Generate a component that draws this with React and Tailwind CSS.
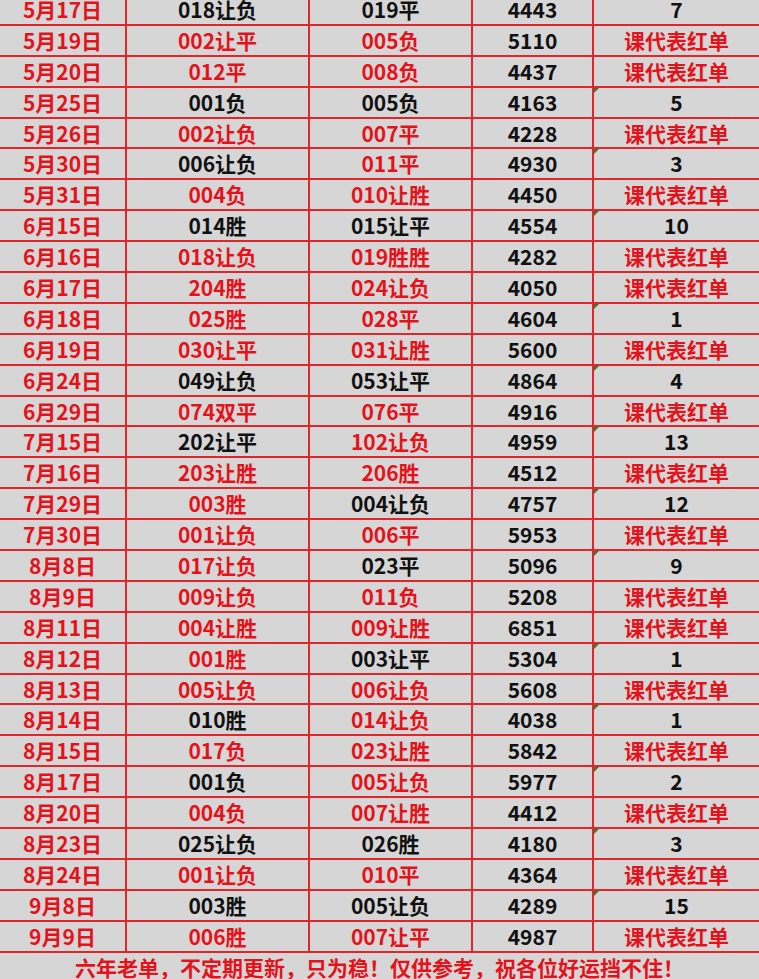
import React from "react";

const R = "text-[#e5121b]";
const K = "text-[#111111]";

// [date, col2, col2Red, col3, col3Red, code, result]
const rows = [
  ["5月17日", "018让负", 0, "019平", 0, "4443", "7"],
  ["5月19日", "002让平", 1, "005负", 1, "5110", ""],
  ["5月20日", "012平", 1, "008负", 1, "4437", ""],
  ["5月25日", "001负", 0, "005负", 0, "4163", "5"],
  ["5月26日", "002让负", 1, "007平", 1, "4228", ""],
  ["5月30日", "006让负", 0, "011平", 1, "4930", "3"],
  ["5月31日", "004负", 1, "010让胜", 1, "4450", ""],
  ["6月15日", "014胜", 0, "015让平", 0, "4554", "10"],
  ["6月16日", "018让负", 1, "019胜胜", 1, "4282", ""],
  ["6月17日", "204胜", 1, "024让负", 1, "4050", ""],
  ["6月18日", "025胜", 1, "028平", 1, "4604", "1"],
  ["6月19日", "030让平", 1, "031让胜", 1, "5600", ""],
  ["6月24日", "049让负", 0, "053让平", 0, "4864", "4"],
  ["6月29日", "074双平", 1, "076平", 1, "4916", ""],
  ["7月15日", "202让平", 0, "102让负", 1, "4959", "13"],
  ["7月16日", "203让胜", 1, "206胜", 1, "4512", ""],
  ["7月29日", "003胜", 1, "004让负", 0, "4757", "12"],
  ["7月30日", "001让负", 1, "006平", 1, "5953", ""],
  ["8月8日", "017让负", 1, "023平", 0, "5096", "9"],
  ["8月9日", "009让负", 1, "011负", 1, "5208", ""],
  ["8月11日", "004让胜", 1, "009让胜", 1, "6851", ""],
  ["8月12日", "001胜", 1, "003让平", 0, "5304", "1"],
  ["8月13日", "005让负", 1, "006让负", 1, "5608", ""],
  ["8月14日", "010胜", 0, "014让负", 1, "4038", "1"],
  ["8月15日", "017负", 1, "023让胜", 1, "5842", ""],
  ["8月17日", "001负", 0, "005让负", 1, "5977", "2"],
  ["8月20日", "004负", 1, "007让胜", 1, "4412", ""],
  ["8月23日", "025让负", 0, "026胜", 0, "4180", "3"],
  ["8月24日", "001让负", 1, "010平", 1, "4364", ""],
  ["9月8日", "003胜", 0, "005让负", 0, "4289", "15"],
  ["9月9日", "006胜", 1, "007让平", 1, "4987", ""],
];

const cell =
  "flex items-center justify-center border-b-2 border-[#e0262b] h-[30.9px]";

const Row = ({ r }) => {
  const [date, a, aRed, b, bRed, code, res] = r;
  return (
    <div className="grid grid-cols-[127px_183px_163px_121px_1fr]">
      <div className={`${cell} border-r-2 ${R}`}>{date}</div>
      <div className={`${cell} border-r-2 ${aRed ? R : K}`}>{a}</div>
      <div className={`${cell} border-r-2 ${bRed ? R : K}`}>{b}</div>
      <div className={`${cell} border-r-2 ${K}`}>{code}</div>
      <div className={`${cell} relative ${res ? K : R}`}>
        {res && (
          <span className="absolute left-0 top-0 w-0 h-0 border-t-[5px] border-r-[5px] border-t-[#2e7d32] border-r-transparent" />
        )}
        {res || "课代表红单"}
      </div>
    </div>
  );
};

export default function App() {
  return (
    <div
      className="w-[759px] h-[979px] overflow-hidden bg-[#d6d6d6] font-bold text-[21px] leading-none"
      style={{ fontFamily: '"Noto Sans CJK SC", "Noto Sans", sans-serif' }}
    >
      <div className="-mt-[5px]">
        {rows.map((r) => (
          <Row key={r[0]} r={r} />
        ))}
      </div>
      <p className={`text-center leading-[28px] ${R}`}>
        六年老单，不定期更新，只为稳！仅供参考，祝各位好运挡不住！
      </p>
    </div>
  );
}
